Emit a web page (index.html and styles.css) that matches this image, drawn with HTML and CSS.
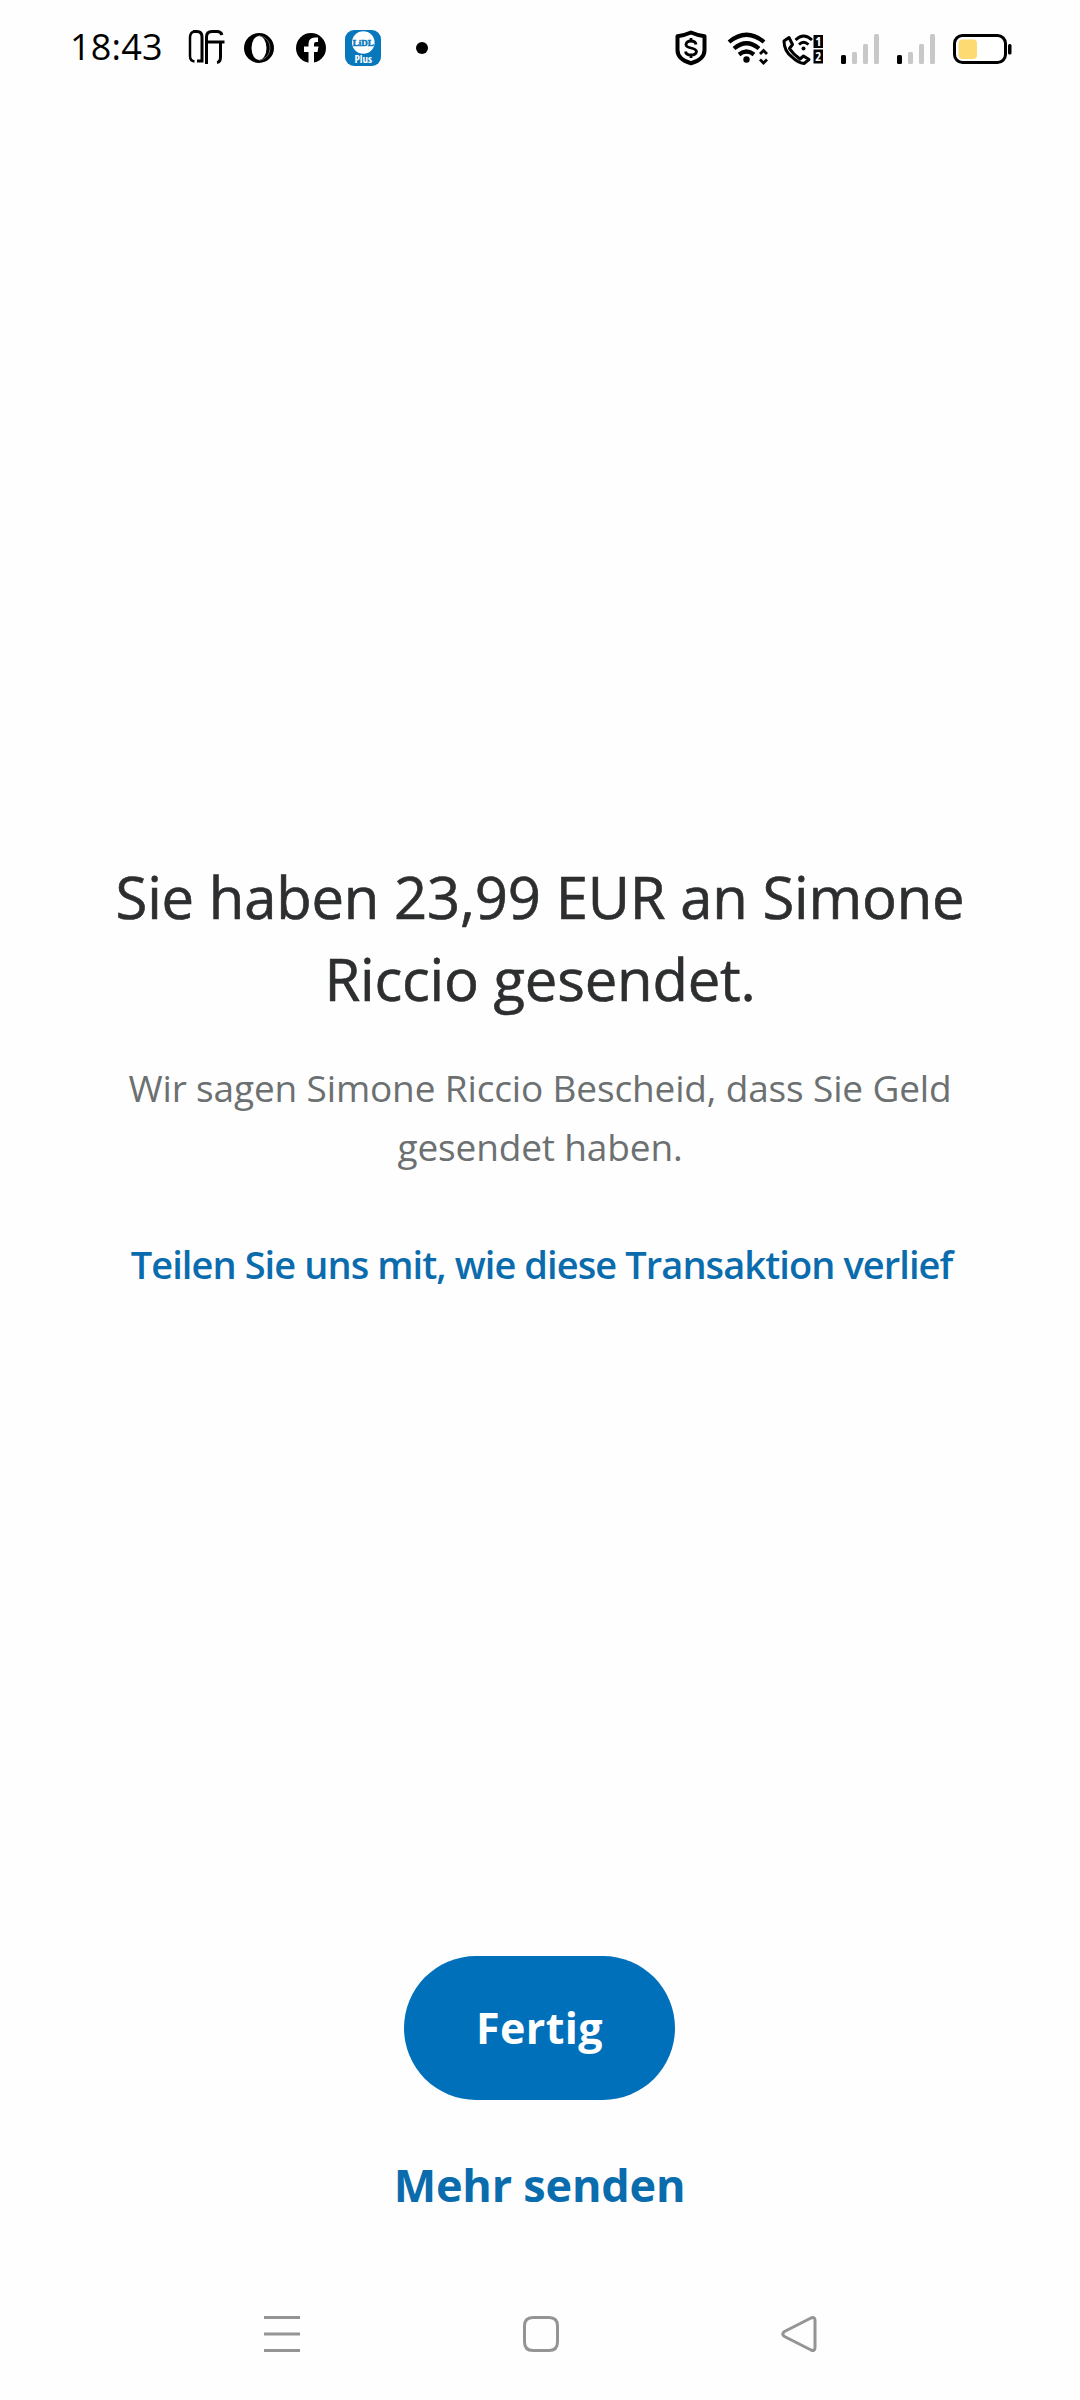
FILE: index.html
```
<!DOCTYPE html>
<html lang="de">
<head>
<meta charset="utf-8">
<title>Geld gesendet</title>
<link rel="stylesheet" href="styles.css">
</head>
<body>
<div class="screen">
  <header class="status">
    <span class="time">18:43</span>
    <svg class="notifications" width="250" height="44" viewBox="0 0 250 44" aria-hidden="true">
      <g fill="none" stroke="#000" stroke-width="3">
        <path d="M8.500 8.500Q4 9 4 15V33Q4 38 8.500 38.500" stroke-width="2.500"/>
        <path d="M7 8.500H11Q16 8.500 16 14V38H11" stroke-width="3"/>
        <path d="M20.500 41V14Q20.500 8.500 26 8.500H31Q35 8.500 36 12"/>
        <path d="M21 19H38.500M34.500 19V34Q34.500 39 31 39.500"/>
      </g>
      <circle cx="73" cy="25" r="15"/>
      <ellipse cx="73" cy="25" rx="7.500" ry="12" fill="#fff"/>
      <path d="M73 12.500Q84 15 84 25T73 37.500" fill="none" stroke="#777" stroke-width=".8"/>
      <circle cx="125" cy="25" r="15"/>
      <path d="M122.500 40.500V29H118V23.500H122.500V21Q122.500 14.500 129 14.500H132V19H130Q128 19 128 21V23.500H132.500L131.500 29H128V40.500Z" fill="#fff"/>
      <rect x="159" y="7" width="36" height="36" rx="9" fill="#0878bd"/>
      <circle cx="177.300" cy="19.500" r="11.300" fill="#fff"/>
      <text x="177.300" y="23" class="lidl">LiDL</text>
      <text x="177.300" y="39.500" class="plus">Plus</text>
      <circle cx="236" cy="25" r="6"/>
    </svg>
    <svg class="system" width="350" height="44" viewBox="0 0 350 44" aria-hidden="true">
      <path d="M21 9.500Q28 12.500 34.500 13.300V27Q34.500 36.500 21 40.300Q7.500 36.500 7.500 27V13.300Q14 12.500 21 9.500Z" fill="none" stroke="#000" stroke-width="4" stroke-linejoin="round"/>
      <path d="M26 21.500Q25.500 18 21 18T16 21.500Q16 24 21 25T26.500 28.500Q26 32 21 32T15.500 28.500M21 15V18M21 32V35" fill="none" stroke="#000" stroke-width="2.800"/>
      <g fill="none" stroke="#000" stroke-width="4.200">
        <path d="M59 19Q76.500 4.500 94 19"/>
        <path d="M64 25.500Q76.500 15 89 25.500"/>
        <path d="M69 31.500Q76.500 25.500 84 31.500"/>
      </g>
      <circle cx="76.500" cy="36.500" r="3.200"/>
      <path d="M90 31L93.500 27.500L97 31M90 36.500L93.500 40L97 36.500" fill="none" stroke="#000" stroke-width="2.800"/>
      <path d="M119 14.500L114 18Q114 28 122 34Q128 40 134 40.500L139 36.500L133.500 33L130 36Q123 31 119.500 25.500L122.500 21.500Z" fill="none" stroke="#000" stroke-width="3" stroke-linejoin="round"/>
      <path d="M125.500 17Q133.500 9 142 17M129 21.500Q133.500 17 138.500 21.500" fill="none" stroke="#000" stroke-width="2.800"/>
      <circle cx="133.500" cy="25.500" r="2"/>
      <rect x="143.500" y="12" width="9.500" height="13"/>
      <rect x="143.500" y="26.500" width="9.500" height="14"/>
      <text x="148.300" y="23" class="sim">1</text>
      <text x="148.300" y="38" class="sim">2</text>
      <rect x="171" y="32" width="5" height="9" rx="1.500"/>
      <g fill="#c8c8c8">
        <rect x="182" y="29" width="5" height="12" rx="1.500"/>
        <rect x="193" y="21" width="5" height="20" rx="1.500"/>
        <rect x="204" y="11" width="5" height="30" rx="1.500"/>
        <rect x="238" y="29" width="5" height="12" rx="1.500"/>
        <rect x="249" y="21" width="5" height="20" rx="1.500"/>
        <rect x="260" y="11" width="5" height="30" rx="1.500"/>
      </g>
      <rect x="227" y="32" width="5" height="9" rx="1.500"/>
      <rect x="284.500" y="12.500" width="51" height="27" rx="8" fill="#fff" stroke="#000" stroke-width="3"/>
      <rect x="288.500" y="16.500" width="18.500" height="19.500" rx="4" fill="#fdda72"/>
      <rect x="338" y="21" width="3.500" height="10.500" rx="1.500"/>
    </svg>
  </header>

  <main class="message">
    <h1 class="headline">Sie haben 23,99 EUR an Simone<br>Riccio gesendet.</h1>
    <p class="note">Wir sagen Simone Riccio Bescheid, dass Sie Geld<br>gesendet haben.</p>
    <a class="feedback">Teilen Sie uns mit, wie diese Transaktion verlief</a>
  </main>

  <div class="actions">
    <button class="primary">Fertig</button>
    <a class="secondary">Mehr senden</a>
  </div>

  <nav class="navbar">
    <svg width="40" height="44" viewBox="0 0 40 44"><path d="M2 5.500H38M2 22H38M2 38.500H38"/></svg>
    <svg width="40" height="44" viewBox="0 0 40 44"><path d="M12 5.500H28Q36.500 5.500 36.500 14V30Q36.500 38.500 28 38.500H12Q3.500 38.500 3.500 30V14Q3.500 5.500 12 5.500Z"/></svg>
    <svg width="40" height="44" viewBox="0 0 40 44"><path d="M32 6L5.500 19.500Q2 22 5.500 24.500L32 38Q36 39.500 36 35.500V8.500Q36 4.500 32 6Z"/></svg>
  </nav>
</div>
</body>
</html>
```
FILE: styles.css
```
* {
  box-sizing: border-box;
}

body {
  margin: 0;
  background: #fefefe;
  font-family: "Open Sans", sans-serif;
}

.screen {
  display: flex;
  flex-direction: column;
  width: 1080px;
  height: 2400px;
}

.status {
  display: flex;
  flex: none;
  height: 96px;
  padding: 25px 60px 0 70px;
}

.time {
  width: 116px;
  font: 36px/44px "Open Sans", sans-serif;
  letter-spacing: .2px;
  color: #000;
}

.notifications {
  margin-top: -2px;
}

.system {
  margin: -2px 0 0 auto;
}

.lidl {
  font: bold 9px "Liberation Serif", serif;
  fill: #0878bd;
  stroke: #0878bd;
  stroke-width: .5px;
  text-anchor: middle;
}

.plus {
  font: bold 11px "Open Sans", sans-serif;
  font-stretch: 80%;
  fill: #fff;
  text-anchor: middle;
}

.sim {
  font: bold 13px "Open Sans", sans-serif;
  font-stretch: 80%;
  fill: #fff;
  text-anchor: middle;
}

.message {
  display: flex;
  flex-direction: column;
  align-items: center;
  height: 1860px;
  padding-top: 760px;
  text-align: center;
}

.headline {
  margin: 0;
  font-size: 58px;
  font-weight: 400;
  line-height: 82px;
  letter-spacing: -.2px;
  color: #2c2e2f;
  -webkit-text-stroke: .6px #2c2e2f;
}

.note {
  margin: 38px 0 59px;
  font-size: 37px;
  line-height: 59px;
  letter-spacing: -.15px;
  color: #6c7071;
}

.feedback {
  padding-left: 3px;
  font-size: 38px;
  font-weight: 600;
  line-height: 59px;
  letter-spacing: -.92px;
  color: #0a6cad;
}

.actions {
  display: flex;
  flex-direction: column;
  align-items: center;
  height: 340px;
  padding-right: 1px;
}

.primary {
  width: 271px;
  height: 144px;
  padding: 0;
  border: 0;
  border-radius: 72px;
  background: #0070ba;
  font: bold 43px/62px "Open Sans", sans-serif;
  letter-spacing: .4px;
  color: #fff;
}

.secondary {
  margin-top: 55px;
  font-size: 45px;
  font-weight: 700;
  line-height: 60px;
  letter-spacing: -.2px;
  color: #0a6cad;
}

.navbar {
  display: flex;
  justify-content: space-between;
  padding: 16px 261px 0 262px;
}

.navbar svg {
  fill: none;
  stroke: #949494;
  stroke-width: 3;
}
```
